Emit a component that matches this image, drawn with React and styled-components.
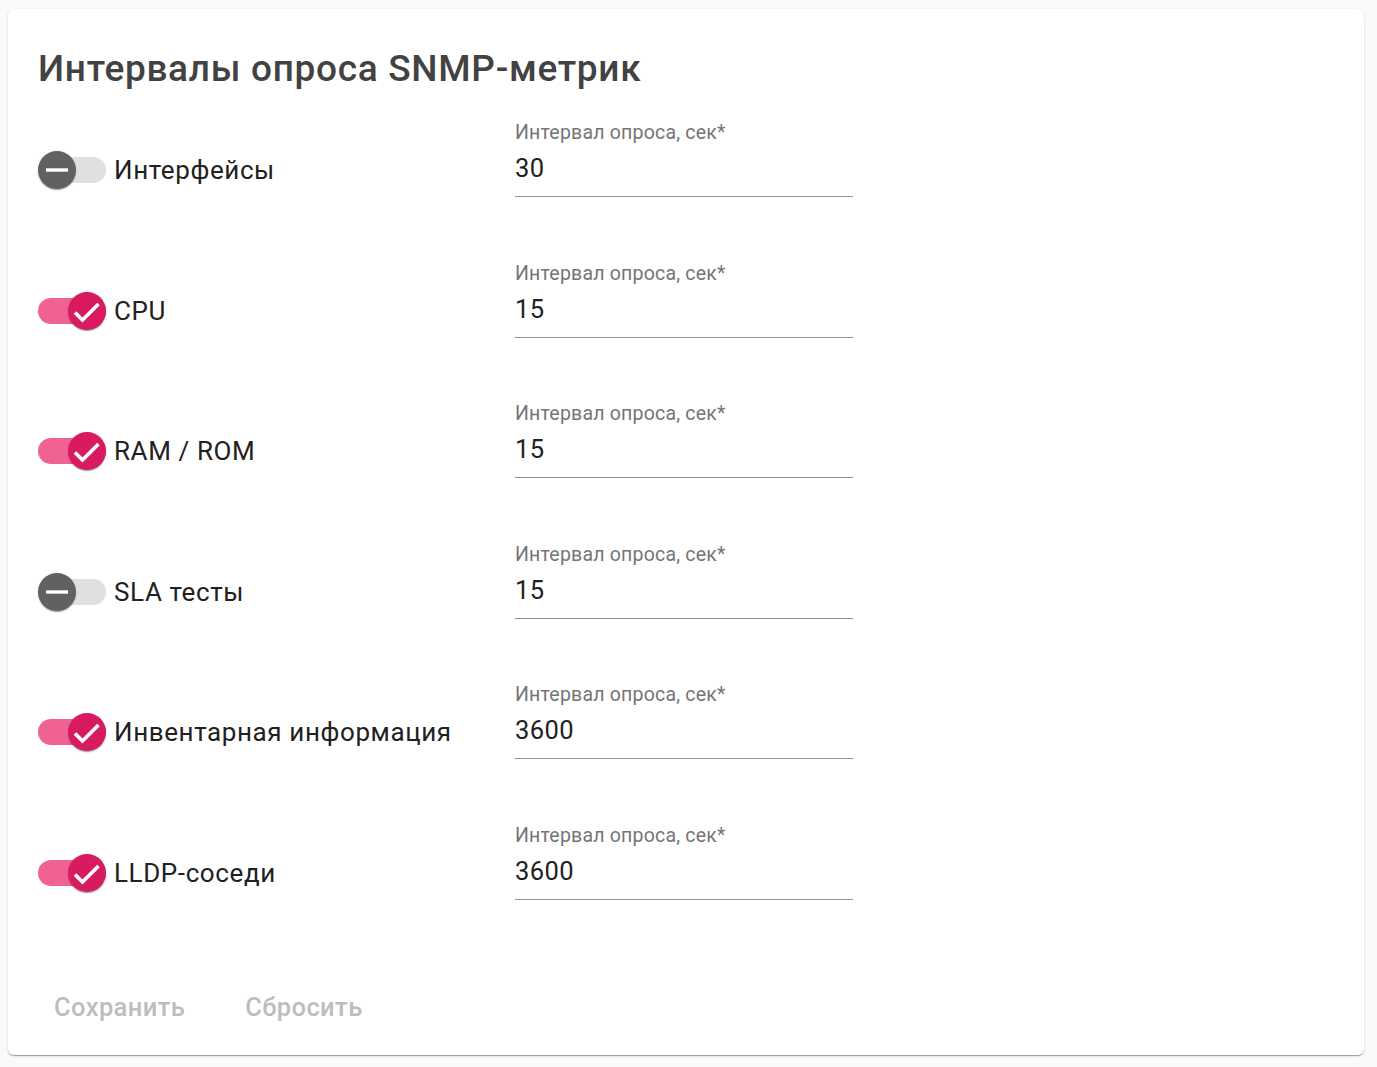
import React from "react";
import styled, { createGlobalStyle } from "styled-components";

const GlobalStyle = createGlobalStyle`
  html, body {
    margin: 0;
    padding: 0;
    background: #fafafa;
    font-family: Roboto, "Liberation Sans", sans-serif;
  }
`;

const Page = styled.div`
  padding: 9px 13px 12px 8px;
`;

const Card = styled.div`
  background: #fff;
  border-radius: 6px;
  box-shadow: 0 2px 1px -1px rgba(0, 0, 0, 0.2), 0 1px 1px 0 rgba(0, 0, 0, 0.14),
    0 1px 3px 0 rgba(0, 0, 0, 0.12);
  padding: 40px 30px 18px 30px;
  min-height: 1046px;
  box-sizing: border-box;
`;

const Title = styled.h1`
  margin: 0 0 33px 0;
  font-size: 37px;
  line-height: 40px;
  font-weight: 500;
  color: #424242;
  letter-spacing: 0.7px;
`;

const Rows = styled.div`
  display: flex;
  flex-direction: column;
  gap: 65.6px;
`;

const Row = styled.div`
  display: grid;
  grid-template-columns: 477px 338px;
  align-items: end;
`;

const SwitchGroup = styled.label`
  display: flex;
  align-items: center;
  gap: 8px;
  margin-bottom: 8px;
  cursor: pointer;
`;

const Track = styled.span`
  position: relative;
  width: 68px;
  height: 38px;
  flex: none;
  &::before {
    content: "";
    position: absolute;
    left: 0;
    right: 0;
    top: 6px;
    height: 26px;
    border-radius: 13px;
    background: ${(p) => (p.$on ? "#f06292" : "#e0e0e0")};
  }
`;

const Thumb = styled.span`
  position: absolute;
  top: 0;
  left: ${(p) => (p.$on ? "30px" : "0")};
  width: 38px;
  height: 38px;
  border-radius: 50%;
  background: ${(p) => (p.$on ? "#d81b60" : "#616161")};
  box-shadow: 0 2px 1px -1px rgba(0, 0, 0, 0.2), 0 1px 1px 0 rgba(0, 0, 0, 0.14),
    0 1px 3px 0 rgba(0, 0, 0, 0.12);
  display: flex;
  svg {
    display: block;
  }
`;

const SwitchText = styled.span`
  font-size: 26px;
  color: #212121;
  letter-spacing: 0.6px;
`;

const Field = styled.div`
  display: flex;
  flex-direction: column;
`;

const FieldLabel = styled.span`
  font-size: 19.5px;
  line-height: 22px;
  color: #757575;
  letter-spacing: 0.2px;
  margin-bottom: 9px;
`;

const Input = styled.input`
  border: none;
  border-bottom: 1px solid #949494;
  outline: none;
  padding: 0 0 12px 0;
  font-family: inherit;
  font-size: 25.5px;
  line-height: 31px;
  color: #212121;
  background: transparent;
  letter-spacing: 0.4px;
`;

const Actions = styled.div`
  display: flex;
  gap: 28px;
  margin-top: 84px;
`;

const TextButton = styled.button`
  border: none;
  background: none;
  padding: 8px 16px;
  font-family: inherit;
  font-size: 25.5px;
  font-weight: 500;
  color: #bdbdbd;
  letter-spacing: 0.4px;
`;

const items = [
  { name: "Интерфейсы", on: false, value: "30" },
  { name: "CPU", on: true, value: "15" },
  { name: "RAM / ROM", on: true, value: "15" },
  { name: "SLA тесты", on: false, value: "15" },
  { name: "Инвентарная информация", on: true, value: "3600" },
  { name: "LLDP-соседи", on: true, value: "3600" },
];

const Toggle = ({ on }) => (
  <Track $on={on}>
    <Thumb $on={on}>
      <svg width="38" height="38" viewBox="0 0 38 38">
        {on ? (
          <path
            d="M7 20.5l7.5 7.5L30.5 12"
            fill="none"
            stroke="#fff"
            strokeWidth="3.6"
          />
        ) : (
          <rect x="8" y="17.3" width="22" height="3.4" fill="#fff" />
        )}
      </svg>
    </Thumb>
  </Track>
);

export default function App() {
  return (
    <>
      <GlobalStyle />
      <Page>
        <Card>
          <Title>Интервалы опроса SNMP-метрик</Title>
          <Rows>
            {items.map((it) => (
              <Row key={it.name}>
                <SwitchGroup>
                  <Toggle on={it.on} />
                  <SwitchText>{it.name}</SwitchText>
                </SwitchGroup>
                <Field>
                  <FieldLabel>Интервал опроса, сек*</FieldLabel>
                  <Input defaultValue={it.value} />
                </Field>
              </Row>
            ))}
          </Rows>
          <Actions>
            <TextButton>Сохранить</TextButton>
            <TextButton>Сбросить</TextButton>
          </Actions>
        </Card>
      </Page>
    </>
  );
}
